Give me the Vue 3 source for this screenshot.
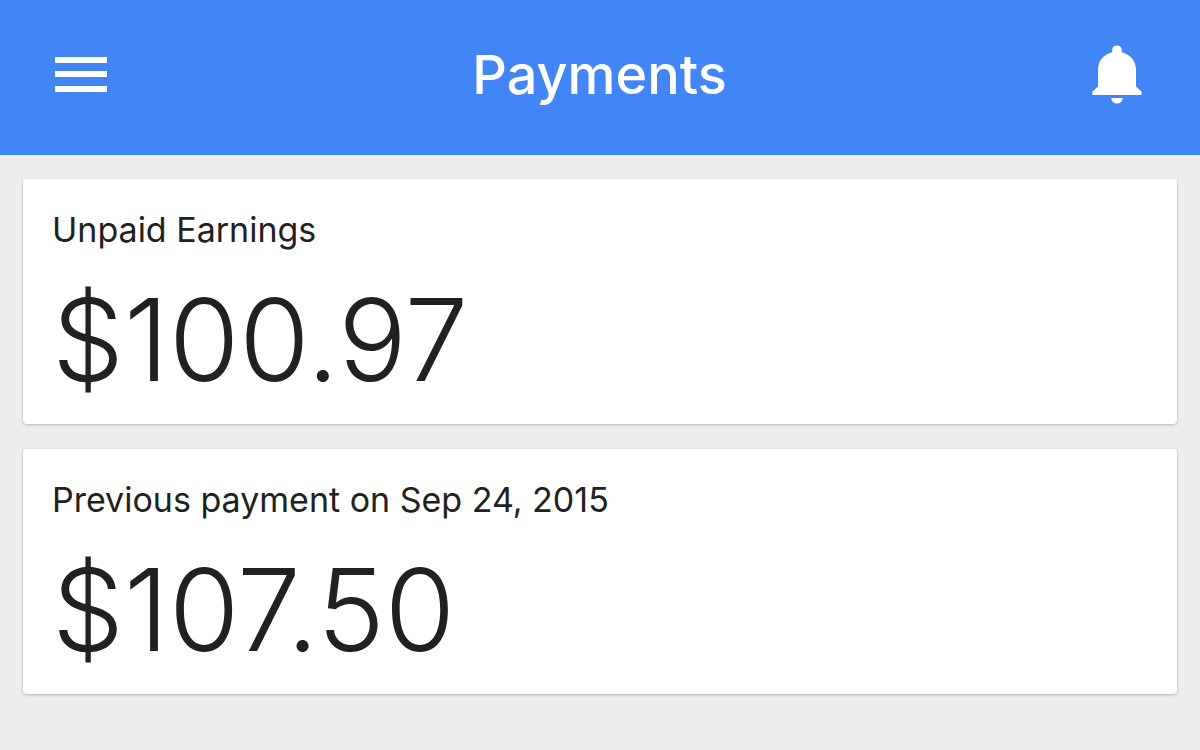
<script setup>
const cards = [
  { label: 'Unpaid Earnings', amount: '$100.97' },
  { label: 'Previous payment on Sep 24, 2015', amount: '$107.50' },
]
</script>

<template>
  <div class="page">
    <header class="bar">
      <button class="icon-button" type="button" aria-label="Menu">
        <svg class="menu" viewBox="0 0 52 36" aria-hidden="true">
          <path d="M0 0h52v6H0zM0 14h52v6H0zM0 29h52v6H0z" />
        </svg>
      </button>
      <h1 class="title">Payments</h1>
      <button class="icon-button" type="button" aria-label="Notifications">
        <svg class="bell" viewBox="0 0 50 60" aria-hidden="true">
          <path d="M25 0.5c-2.8 0-4.8 1.8-4.8 4.4v2.3C11.500 9.300 6 16 6 25v16.500L0.400 46.800V50h49.200v-3.200L44 41.500V25c0-9-5.500-15.700-14.200-17.800V4.900c0-2.600-2-4.400-4.800-4.400zM19 53c0.800 3.800 3 5.600 6 5.600s5.200-1.800 6-5.600z" />
        </svg>
      </button>
    </header>
    <main class="content">
      <section v-for="card in cards" :key="card.label" class="card">
        <h2 class="label">{{ card.label }}</h2>
        <p class="amount">{{ card.amount }}</p>
      </section>
    </main>
  </div>
</template>

<style>
body {
  margin: 0;
  background: #eeeeee;
}
</style>

<style scoped>
.page {
  min-height: 100vh;
  background: #eeeeee;
  color: #212121;
  font-family: Inter, Roboto, sans-serif;
}
.bar {
  display: flex;
  align-items: center;
  justify-content: space-between;
  padding: 39px 58px 44px 55px;
  background: #4285f4;
  color: #ffffff;
}
.icon-button {
  display: flex;
  align-items: center;
  padding: 0;
  border: 0;
  background: none;
  color: inherit;
}
.icon-button svg {
  display: block;
  fill: currentColor;
}
.menu {
  width: 52px;
  height: 36px;
}
.bell {
  width: 50px;
  height: 60px;
}
.title {
  margin: 0;
  font-size: 54px;
  line-height: 72px;
  font-weight: 500;
}
.content {
  display: grid;
  gap: 25px;
  padding: 24px 23px;
}
.card {
  padding: 31px 29px 24px;
  border-radius: 4px;
  background: #ffffff;
  box-shadow: 0 1px 3px rgba(0, 0, 0, 0.25);
}
.label {
  margin: 0;
  font-size: 34px;
  line-height: 40px;
  font-weight: 400;
}
.amount {
  margin: 30px 0 0;
  font-size: 114px;
  line-height: 120px;
  font-weight: 300;
}
</style>
